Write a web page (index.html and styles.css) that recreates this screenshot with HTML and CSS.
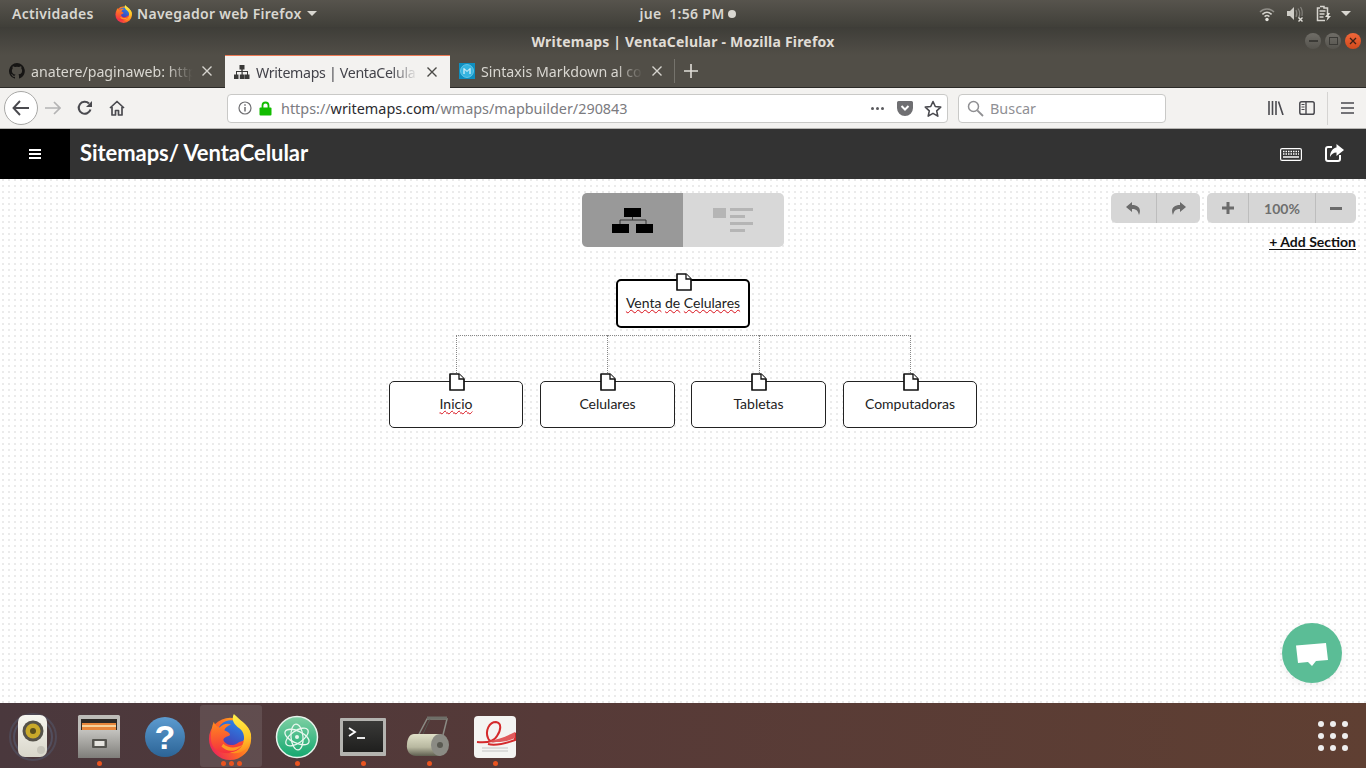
FILE: index.html
```html
<!DOCTYPE html>
<html lang="es">
<head>
<meta charset="utf-8">
<title>Writemaps | VentaCelular - Mozilla Firefox</title>
<link rel="stylesheet" href="styles.css">
</head>
<body>
<svg class="defs" width="0" height="0" aria-hidden="true">
  <defs>
    <linearGradient id="ffbase" x1="0.9" y1="0.3" x2="0.1" y2="0.8"><stop offset="0" stop-color="#ffb01f"/><stop offset="0.5" stop-color="#ff6a24"/><stop offset="1" stop-color="#ee2a55"/></linearGradient>
    <linearGradient id="ffflame" x1="0.4" y1="0" x2="0.5" y2="1"><stop offset="0" stop-color="#fff04a"/><stop offset="0.6" stop-color="#ffc928"/><stop offset="1" stop-color="#ff8a1f"/></linearGradient>
    <linearGradient id="ffblue" x1="0.7" y1="0" x2="0.2" y2="1"><stop offset="0" stop-color="#2a86e8"/><stop offset="0.6" stop-color="#3a55c4"/><stop offset="1" stop-color="#6a2aa0"/></linearGradient>
    <linearGradient id="fffox" x1="0.2" y1="0" x2="0.3" y2="1"><stop offset="0" stop-color="#ff8a1f"/><stop offset="1" stop-color="#f5303e"/></linearGradient>
    <linearGradient id="helpb" x1="0" y1="0" x2="0" y2="1"><stop offset="0" stop-color="#5c9bd0"/><stop offset="1" stop-color="#2c6496"/></linearGradient>
    <linearGradient id="atomg" x1="0" y1="0" x2="0" y2="1"><stop offset="0" stop-color="#7fd0a4"/><stop offset="1" stop-color="#14a86f"/></linearGradient>
    <linearGradient id="cabg" x1="0" y1="0" x2="0" y2="1"><stop offset="0" stop-color="#c4c3bf"/><stop offset="1" stop-color="#7f7e7a"/></linearGradient>
    <linearGradient id="rollg" x1="0" y1="0" x2="0" y2="1"><stop offset="0" stop-color="#e0e0c8"/><stop offset="0.6" stop-color="#b8b8a0"/><stop offset="1" stop-color="#5f5f50"/></linearGradient>
    <linearGradient id="spkg" x1="0" y1="0" x2="0" y2="1"><stop offset="0" stop-color="#f7f6f0"/><stop offset="1" stop-color="#d8d6ca"/></linearGradient>
    <linearGradient id="termg" x1="0" y1="0" x2="0" y2="1"><stop offset="0" stop-color="#3a3a38"/><stop offset="1" stop-color="#1f1f1e"/></linearGradient>
    <symbol id="ff" viewBox="0 0 48 48">
      <circle cx="23" cy="26" r="22" fill="url(#ffbase)"/>
      <circle cx="24" cy="21" r="14.500" fill="url(#ffblue)"/>
      <path d="M6 8c1 3 3 5 6 6 3-3 8-5 12-3-3 1-6 3-7 6 3 1 6 3 6 5-3 2-6 2-7 5 2 5 9 7 14 4 3-2 6-3 8-3-1 7-8 13-17 13C9 41 3 34 3 25c0-6 1-12 3-17z" fill="url(#fffox)"/>
      <path d="M16 31c5 5 13 5 20 1-5 7-15 9-22 2z" fill="#ff9a24"/>
      <path d="M27 0c-3 6 0 11 6 15 5 4 6 11 3 17-3 6-9 8-14 8 11 4 22-4 23-15C46 14 36 9 27 0z" fill="url(#ffflame)"/>
    </symbol>
    <symbol id="doc" viewBox="0 0 16 18">
      <path d="M1 1h9l5 5v11H1z" fill="#fff" stroke="#111" stroke-width="1.700" stroke-linejoin="round"/>
      <path d="M10 1v5h5" fill="#fff" stroke="#111" stroke-width="1.300"/>
    </symbol>
  </defs>
</svg>

<div class="screen">
  <header class="topbar">
    <div class="tb-left">
      <span class="tb-activities">Actividades</span>
      <span class="tb-app">
        <svg class="tb-ff"><use href="#ff"/></svg>
        <span>Navegador web Firefox</span>
        <i class="caret"></i>
      </span>
    </div>
    <div class="tb-clock"><span>jue&nbsp;&nbsp;1:56 PM</span><i class="clock-dot"></i></div>
    <div class="tb-right">
      <svg class="tray" width="16" height="16" viewBox="0 0 16 16"><path d="M1 6c4-4 10-4 14 0" fill="none" stroke="#8f8d87" stroke-width="1.500"/><path d="M3.400 8.400c2.800-2.600 6.400-2.600 9.200 0" fill="none" stroke="#d6d4ce" stroke-width="1.500"/><path d="M5.600 10.600c1.400-1.200 3.400-1.200 4.800 0" fill="none" stroke="#d6d4ce" stroke-width="1.500"/><circle cx="8" cy="13.500" r="1.700" fill="#e6e4de"/></svg>
      <svg class="tray" width="18" height="16" viewBox="0 0 18 16"><path d="M1 5h3l4-4v13l-4-4H1z" fill="#cfcdc7"/><path d="M10 4c1 2 1 5 0 7M12 2.500c2 3 2 7 .5 9.500M14.500 1c2 3 2 6 1.500 9" fill="none" stroke="#85837d" stroke-width="1.200"/><path d="M12.500 11.500l4 4M16.500 11.500l-4 4" stroke="#e0ded8" stroke-width="1.400"/></svg>
      <svg class="tray tray-batt" width="16" height="17" viewBox="0 0 16 17"><path d="M4 1.500h4v1.500h3.500v6M9 15.500H1.500V3H4" fill="none" stroke="#d6d4ce" stroke-width="1.500"/><path d="M3.500 6h6M3.500 9h5M3.500 12h4" stroke="#d6d4ce" stroke-width="1.300"/><path d="M12 8l-3 4h2.500L10.500 16l4.500-5h-2.500l1.500-3z" fill="#e0ded8"/></svg>
      <i class="caret caret-tray"></i>
    </div>
  </header>

  <div class="titlebar">
    <span class="title-text">Writemaps | VentaCelular - Mozilla Firefox</span>
    <div class="winbtns">
      <span class="winbtn"><i class="win-min"></i></span>
      <span class="winbtn"><i class="win-max"></i></span>
      <span class="winbtn winbtn-close">
        <svg width="8" height="8" viewBox="0 0 8 8"><path d="M1 1l6 6M7 1l-6 6" stroke="#3c2016" stroke-width="1.300"/></svg>
      </span>
    </div>
  </div>

  <nav class="tabbar">
    <div class="tab">
      <svg class="favicon" viewBox="0 0 16 16"><path fill="#161514" d="M8 0a8 8 0 0 0-2.500 15.600c.4.100.5-.2.500-.4v-1.400c-2.200.5-2.700-1-2.700-1-.4-.9-.9-1.200-.9-1.200-.7-.5.100-.5.100-.5.800.1 1.200.8 1.200.8.700 1.200 1.900.9 2.300.7.100-.5.300-.9.500-1.100-1.800-.2-3.600-.9-3.600-4 0-.9.300-1.600.8-2.100-.1-.2-.4-1 .1-2.100 0 0 .7-.2 2.200.8a7.600 7.600 0 0 1 4 0c1.500-1 2.200-.8 2.200-.8.400 1.100.2 1.900.1 2.100.5.600.8 1.300.8 2.100 0 3.100-1.900 3.700-3.700 3.900.3.300.6.800.6 1.500v2.200c0 .2.100.5.600.4A8 8 0 0 0 8 0z"/></svg>
      <span class="tab-title">anatere/paginaweb: http</span>
      <svg class="tab-x" viewBox="0 0 10 10"><path d="M.5.500l9 9M9.500.500l-9 9" stroke="#d6d4ce" stroke-width="1.400"/></svg>
    </div>
    <div class="tab tab-active">
      <svg class="favicon" viewBox="0 0 16 16"><path fill="#3a3a38" d="M5.500 1h5v4.500H8.700V7H14v3.500h1.500V15h-5v-4.500H13V8H8.700v2.500h1.500V15H5.800v-4.500h1.700V8H3v2.500h1.500V15H-.500v-4.500H2V7h5.300V5.500H5.500z"/></svg>
      <span class="tab-title">Writemaps | VentaCelula</span>
      <svg class="tab-x" viewBox="0 0 10 10"><path d="M.5.500l9 9M9.500.500l-9 9" stroke="#4a4946" stroke-width="1.400"/></svg>
    </div>
    <div class="tab">
      <svg class="favicon" viewBox="0 0 16 16"><rect width="16" height="16" fill="#0f8fc0"/><circle cx="8" cy="8" r="6.500" fill="#35b4e0" stroke="#8fdcf5" stroke-width=".6"/><path d="M5 11V5.500l3 3 3-3V11" fill="none" stroke="#fff" stroke-width="1"/></svg>
      <span class="tab-title">Sintaxis Markdown al cor</span>
      <svg class="tab-x" viewBox="0 0 10 10"><path d="M.5.500l9 9M9.500.500l-9 9" stroke="#d6d4ce" stroke-width="1.400"/></svg>
    </div>
    <i class="tab-sep"></i>
    <svg class="tab-plus" viewBox="0 0 14 14"><path d="M7 0v14M0 7h14" stroke="#e0ded8" stroke-width="1.600"/></svg>
  </nav>

  <div class="navbar">
    <span class="nav-back">
      <svg width="18" height="16" viewBox="0 0 18 16"><path d="M8 1L1.500 8 8 15M1.500 8H17" fill="none" stroke="#4a4a4f" stroke-width="1.900"/></svg>
    </span>
    <svg class="nav-ico nav-fwd" width="16" height="14" viewBox="0 0 16 14"><path d="M9 1l6 6-6 6M15 7H0" fill="none" stroke="#b4b4b4" stroke-width="1.700"/></svg>
    <svg class="nav-ico nav-reload" width="16" height="16" viewBox="0 0 16 16"><path d="M13.500 9.500A6 6 0 1 1 12 3.500" fill="none" stroke="#4a4a4f" stroke-width="2.100"/><path d="M15 1v6H9z" fill="#4a4a4f"/></svg>
    <svg class="nav-ico nav-home" width="16" height="16" viewBox="0 0 16 16"><path d="M1 8l7-6.500L15 8M3 7v8h3.500v-4.500h3V15H13V7" fill="none" stroke="#4a4a4f" stroke-width="1.700" stroke-linejoin="round"/></svg>

    <div class="urlbar">
      <svg class="url-info" width="16" height="16" viewBox="0 0 16 16"><circle cx="8" cy="8" r="6" fill="none" stroke="#6f6f72" stroke-width="1.200"/><path d="M8 7v4.500M8 4.300v1.400" stroke="#6f6f72" stroke-width="1.500"/></svg>
      <svg class="url-lock" width="13" height="15" viewBox="0 0 13 15"><path d="M3.500 7V4.500a3 3 0 0 1 6 0V7" fill="none" stroke="#12bc00" stroke-width="1.800"/><rect x=".5" y="6.500" width="12" height="8" rx="1" fill="#12bc00"/></svg>
      <span class="url-text">https://<b>writemaps.com</b>/wmaps/mapbuilder/290843</span>
      <span class="url-dots"><i></i><i></i><i></i></span>
      <svg class="url-pocket" width="16" height="15" viewBox="0 0 16 15"><path d="M1.500 0h13A1.500 1.500 0 0 1 16 1.500V7A8 8 0 0 1 0 7V1.500A1.500 1.500 0 0 1 1.500 0z" fill="#6f6f72"/><path d="M4.500 5L8 8.500 11.500 5" fill="none" stroke="#fff" stroke-width="2"/></svg>
      <svg class="url-star" width="18" height="17" viewBox="0 0 18 17"><path d="M9 1.500l2.300 5 5.400.6-4 3.700 1.100 5.300L9 13.400l-4.800 2.700 1.100-5.300-4-3.700 5.400-.6z" fill="none" stroke="#4a4a4f" stroke-width="1.600" stroke-linejoin="round"/></svg>
    </div>

    <div class="searchbar">
      <svg width="17" height="17" viewBox="0 0 17 17"><circle cx="6.500" cy="6.500" r="5" fill="none" stroke="#8f8f92" stroke-width="1.500"/><path d="M10.300 10.300l5.700 5.700" stroke="#8f8f92" stroke-width="1.800"/></svg>
      <span>Buscar</span>
    </div>

    <svg class="nav-ico nav-lib" width="16" height="14" viewBox="0 0 16 14"><path d="M1 0v14M4.500 0v14M8 0v14M10.500.5L15 14" fill="none" stroke="#4a4a4f" stroke-width="1.600"/></svg>
    <svg class="nav-ico nav-side" width="16" height="14" viewBox="0 0 16 14"><rect x=".8" y=".8" width="14.400" height="12.400" rx="1.800" fill="none" stroke="#4a4a4f" stroke-width="1.500"/><path d="M7 1v12" stroke="#4a4a4f" stroke-width="1.400"/><path d="M2.500 3.500h3M2.500 6h3M2.500 8.500h3" stroke="#4a4a4f"/></svg>
    <i class="nav-sep"></i>
    <svg class="nav-ico nav-menu" width="13" height="12" viewBox="0 0 13 12"><path d="M0 1h13M0 6h13M0 11h13" stroke="#4a4a4f" stroke-width="1.700"/></svg>
  </div>

  <div class="appbar">
    <div class="app-burger">
      <svg width="12" height="10" viewBox="0 0 12 10"><path d="M0 1h12M0 5h12M0 9h12" stroke="#fff" stroke-width="1.800"/></svg>
    </div>
    <h1 class="app-title">Sitemaps/ VentaCelular</h1>
    <svg class="app-kb" width="22" height="13" viewBox="0 0 22 13"><rect x=".6" y=".6" width="20.800" height="11.800" rx="1.500" fill="none" stroke="#fff" stroke-width="1.200"/><path d="M3 3.500h16M3 6h16" stroke="#fff" stroke-width="1.500" stroke-dasharray="1.500 1"/><path d="M3 9h16" stroke="#fff" stroke-width="1.500"/></svg>
    <svg class="app-share" width="19" height="18" viewBox="0 0 19 18"><path d="M7 3H3A2 2 0 0 0 1 5v10a2 2 0 0 0 2 2h10a2 2 0 0 0 2-2v-4" fill="none" stroke="#fff" stroke-width="2"/><path d="M11.500 0L19 6l-7.500 6V8.500C8.500 8.500 6.500 10 5 13 5 7.500 8 4 11.500 3.500z" fill="#fff"/></svg>
  </div>

  <main class="canvas">
    <div class="viewtoggle">
      <span class="vt-btn vt-on">
        <svg width="42" height="25" viewBox="0 0 42 25"><rect x="12" y="0" width="17" height="9" fill="#000"/><path d="M20.500 9v3M8 17v-5h26v5" fill="none" stroke="#333" stroke-width="1"/><rect x="0" y="16" width="17" height="9" fill="#000"/><rect x="24" y="16" width="17" height="9" fill="#000"/></svg>
      </span>
      <span class="vt-btn vt-off">
        <svg class="vt-list" width="40" height="24" viewBox="0 0 40 24"><rect x="0" y="0" width="13" height="10" fill="#b5b5b5"/><path d="M17 1.500h23M17 8.500h15M17 15.500h23M17 22.500h15" stroke="#b5b5b5" stroke-width="3"/></svg>
      </span>
    </div>

    <div class="ctrls">
      <div class="ctrl-row">
        <div class="ctrl-group">
          <span class="ctrl ctrl-hist"><svg width="15" height="13" viewBox="0 0 15 13"><path d="M6 0L0 5l6 5V7c4 0 6 1.500 7 6 2.500-5.500 0-10-7-10z" fill="#6b6b6b"/></svg></span>
          <span class="ctrl ctrl-hist"><svg width="15" height="13" viewBox="0 0 15 13"><path d="M9 0l6 5-6 5V7c-4 0-6 1.500-7 6-2.500-5.500 0-10 7-10z" fill="#6b6b6b"/></svg></span>
        </div>
        <div class="ctrl-group">
          <span class="ctrl ctrl-pm"><svg width="12" height="12" viewBox="0 0 12 12"><path d="M6 0v12M0 6h12" stroke="#6b6b6b" stroke-width="3"/></svg></span>
          <span class="ctrl ctrl-pct">100%</span>
          <span class="ctrl ctrl-pm"><svg width="12" height="3" viewBox="0 0 12 3"><path d="M0 1.500h12" stroke="#6b6b6b" stroke-width="3"/></svg></span>
        </div>
      </div>
      <a class="add-section">+ Add Section</a>
    </div>

    <div class="tree">
      <i class="ln ln-h"></i>
      <i class="ln ln-v v1"></i>
      <i class="ln ln-v v2"></i>
      <i class="ln ln-v v3"></i>
      <i class="ln ln-v v4"></i>

      <div class="node node-root"><svg class="doc"><use href="#doc"/></svg><span class="label"><u>Venta</u> <u>de</u> <u>Celulares</u></span></div>
      <div class="node n1"><svg class="doc"><use href="#doc"/></svg><span class="label"><u>Inicio</u></span></div>
      <div class="node n2"><svg class="doc"><use href="#doc"/></svg><span class="label">Celulares</span></div>
      <div class="node n3"><svg class="doc"><use href="#doc"/></svg><span class="label">Tabletas</span></div>
      <div class="node n4"><svg class="doc"><use href="#doc"/></svg><span class="label">Computadoras</span></div>
    </div>

    <div class="chat">
      <svg width="34" height="26" viewBox="0 0 34 26"><path d="M1 3.500L31 1l2 17-12 1-4 5-4-4-10 1z" fill="#fff"/></svg>
    </div>
  </main>

  <footer class="dock">
    <div class="dock-item">
      <svg width="50" height="48" viewBox="0 0 50 48"><circle cx="25" cy="24" r="23" fill="none" stroke="#5a6a88" stroke-width="2" opacity=".35"/><circle cx="25" cy="24" r="19" fill="none" stroke="#5a6a88" stroke-width="2" opacity=".45"/><rect x="10" y="2" width="29" height="42" rx="7" fill="url(#spkg)"/><circle cx="25" cy="18" r="10.500" fill="#55524a"/><circle cx="25" cy="18" r="7.500" fill="#c9a92a"/><circle cx="25" cy="18" r="3" fill="#5a4e1c"/><circle cx="33" cy="37" r="4" fill="#c8c6bc"/></svg>
    </div>
    <div class="dock-item dock-open">
      <svg width="44" height="44" viewBox="0 0 44 44"><rect x="1" y="0" width="42" height="43" rx="1.500" fill="#bdbcb8"/><rect x="4" y="4" width="36" height="12" fill="#2d2a26"/><rect x="5" y="8" width="34" height="9" fill="#e8873a"/><rect x="5" y="10" width="34" height="2" fill="#f7d29a"/><rect x="1" y="15" width="42" height="28" fill="url(#cabg)"/><rect x="15" y="24" width="15" height="9" rx="1" fill="#55544f"/><rect x="17.500" y="26" width="10" height="5" fill="#e6e5e0"/></svg>
      <span class="dots"><i></i></span>
    </div>
    <div class="dock-item">
      <svg width="42" height="42" viewBox="0 0 42 42"><circle cx="21" cy="21" r="20" fill="url(#helpb)"/><text class="help-q" x="21" y="33" text-anchor="middle">?</text></svg>
    </div>
    <div class="dock-item dock-active">
      <svg class="dock-ff"><use href="#ff"/></svg>
      <span class="dots"><i></i><i></i><i></i></span>
    </div>
    <div class="dock-item dock-open">
      <svg width="44" height="44" viewBox="0 0 44 44"><circle cx="22" cy="22" r="20.500" fill="url(#atomg)" stroke="#e8f3ec" stroke-width="1.500"/><g fill="none" stroke="#e8f7ee" stroke-width="1.300"><ellipse cx="22" cy="22" rx="13" ry="6" transform="rotate(25 22 22)"/><ellipse cx="22" cy="22" rx="13" ry="6" transform="rotate(85 22 22)"/><ellipse cx="22" cy="22" rx="13" ry="6" transform="rotate(145 22 22)"/></g><circle cx="22" cy="22" r="2" fill="#e8f7ee"/></svg>
      <span class="dots"><i></i></span>
    </div>
    <div class="dock-item dock-open">
      <svg width="46" height="38" viewBox="0 0 46 38"><rect width="46" height="38" rx="1" fill="#b4b4b0"/><rect x="3" y="3" width="40" height="31" fill="url(#termg)"/><path d="M9 10l6 4-6 4" fill="none" stroke="#fff" stroke-width="1.800"/><path d="M17 20h8" stroke="#fff" stroke-width="1.800"/></svg>
      <span class="dots"><i></i></span>
    </div>
    <div class="dock-item dock-open">
      <svg width="46" height="42" viewBox="0 0 46 42"><path d="M12 20L21 3h20l-4 16" fill="none" stroke="#8b8b84" stroke-width="1.500"/><path d="M16 20L24 3" fill="none" stroke="#55554f" stroke-width="1"/><path d="M21 2h20" stroke="#6e6e68" stroke-width="3"/><path d="M8 18h24a7 7 0 0 1 6 3v16a7 7 0 0 1-6 3H10C4 40 0 35 1 28c.5-6 3-10 7-10z" fill="url(#rollg)"/><ellipse cx="34" cy="29" rx="9" ry="11" fill="#8b8b84"/><circle cx="34" cy="29" r="3" fill="#5a5a52"/></svg>
      <span class="dots"><i></i></span>
    </div>
    <div class="dock-item dock-open">
      <svg width="42" height="42" viewBox="0 0 42 42"><rect width="42" height="42" rx="4" fill="#f4f4f2"/><path d="M3 26c10 1 17 0 20-6 4-6 5-13-1-14-7 0-11 9-8 16 1 3 4 4 8 3 7-1 13-4 19-7v6c-11 4-19 6-27 4" fill="none" stroke="#d42a2c" stroke-width="2"/><path d="M14 25c9-1 17-4 27-9v6c-9 4-18 5-27 3z" fill="#e05a5c"/><path d="M8 32h26M8 35h26" stroke="#c4c4c4"/></svg>
      <span class="dots"><i></i></span>
    </div>
    <div class="appgrid">
      <i></i><i></i><i></i><i></i><i></i><i></i><i></i><i></i><i></i>
    </div>
  </footer>
</div>
</body>
</html>
```
FILE: styles.css
```css
* { box-sizing: border-box; }
html, body { margin: 0; padding: 0; }
body { width: 1366px; height: 768px; overflow: hidden; font-family: "Noto Sans", "Open Sans", sans-serif; }
.defs { position: absolute; }
i { display: block; font-style: normal; }
svg { display: block; flex: none; }

.screen { width: 1366px; height: 768px; display: flex; flex-direction: column; }

/* GNOME top bar */
.topbar { height: 27px; flex: none; display: grid; grid-template-columns: 1fr auto 1fr; align-items: center; padding-left: 12px; padding-right: 15px; background: linear-gradient(#57544d, #403f39); color: #d9d7d1; font-size: 14px; font-weight: 600; letter-spacing: .3px; }
.tb-left { display: flex; align-items: center; }
.tb-activities { width: 103px; flex: none; }
.tb-app { display: flex; align-items: center; gap: 4px; }
.tb-ff { width: 18px; height: 18px; }
.caret { width: 0; height: 0; border-left: 5px solid transparent; border-right: 5px solid transparent; border-top: 5px solid #d9d7d1; margin-left: 1px; }
.tb-clock { display: flex; align-items: center; gap: 3px; margin-left: 12px; }
.clock-dot { width: 8px; height: 8px; border-radius: 50%; background: #d9d7d1; }
.tb-right { display: flex; align-items: center; justify-content: flex-end; gap: 11px; }
.tray-batt { margin-left: 1px; }
.caret-tray { margin-left: -2px; }

/* Window title */
.titlebar { height: 28px; flex: none; position: relative; display: flex; align-items: center; justify-content: center; background: linear-gradient(#3e3d38, #514e47); color: #e0ddd6; font-size: 14px; font-weight: 700; letter-spacing: .2px; }
.winbtns { position: absolute; right: 5px; top: 6px; display: flex; gap: 4px; }
.winbtn { width: 16px; height: 16px; border-radius: 50%; background: linear-gradient(#6f6d67, #55534d); display: flex; align-items: center; justify-content: center; }
.winbtn-close { background: linear-gradient(#f0673a, #d24a1c); }
.win-min { width: 9px; height: 2px; background: #3b3a36; }
.win-max { width: 9px; height: 8px; border: 1px solid #3b3a36; }

/* Tabs */
.tabbar { height: 33px; flex: none; display: flex; align-items: stretch; background: #514e47; border-bottom: 1px solid #2b2a27; color: #d9d7d1; font-size: 14.200px; }
.tab { width: 225px; display: flex; align-items: center; padding-left: 9px; padding-right: 13px; gap: 6px; }
.tab-active { background: #f3f2f0; color: #43434a; border-top: 2px solid #ed7a55; margin-top: -1px; height: 34px; letter-spacing: -.32px; }
.favicon { width: 16px; height: 16px; }
.tab-title { flex: 1; min-width: 0; white-space: nowrap; overflow: hidden; -webkit-mask-image: linear-gradient(90deg, #000 82%, transparent 98%); mask-image: linear-gradient(90deg, #000 82%, transparent 98%); }
.tab-x { width: 10px; height: 10px; }
.tab-sep { width: 1px; height: 24px; background: #75736c; align-self: center; margin-left: -1px; }
.tab-plus { width: 14px; height: 14px; align-self: center; margin-left: 9px; }

/* Navigation bar */
.navbar { height: 41px; flex: none; display: flex; align-items: center; background: #f3f2f0; border-bottom: 1px solid #b6b5b2; padding-left: 4px; }
.nav-back { width: 34px; height: 34px; border: 1px solid #a8a8a6; border-radius: 50%; background: #fff; display: flex; align-items: center; justify-content: center; }
.nav-fwd { margin-left: 7px; }
.nav-reload { margin-left: 16px; }
.nav-home { margin-left: 16px; }
.urlbar { margin-left: 102px; width: 721px; height: 29px; border: 1px solid #c9c9c7; border-radius: 4px; background: #fff; display: flex; align-items: center; padding-left: 9px; }
.url-lock { margin-left: 6px; }
.url-text { margin-left: 9px; font-size: 14.400px; color: #7b7b80; white-space: nowrap; }
.url-text b { font-weight: 400; color: #2b2b30; }
.url-dots { margin-left: auto; display: flex; gap: 2px; }
.url-dots i { width: 3px; height: 3px; border-radius: 50%; background: #5a5a5e; }
.url-pocket { margin-left: 13px; }
.url-star { margin-left: 11px; margin-right: 5px; }
.searchbar { margin-left: 10px; width: 208px; height: 29px; border: 1px solid #c9c9c7; border-radius: 4px; background: #fff; display: flex; align-items: center; padding-left: 8px; gap: 6px; font-size: 14.400px; color: #8f8f94; }
.nav-lib { margin-left: 102px; }
.nav-side { margin-left: 15px; }
.nav-sep { width: 1px; height: 33px; background: #d5d4d2; margin-left: 12px; }
.nav-menu { margin-left: 13px; }

/* App header */
.appbar { height: 50px; flex: none; display: flex; align-items: center; background: #333; padding-right: 22px; }
.app-burger { width: 70px; height: 50px; background: #000; display: flex; align-items: center; justify-content: center; }
.app-title { margin: 0 0 4px 10px; flex: 1; font-family: Lato, sans-serif; font-size: 22px; font-weight: 700; color: #fff; letter-spacing: -.06px; }
.app-kb { margin-right: 23px; }
.app-share { margin-bottom: 3px; }

/* Canvas */
.canvas { flex: 1; position: relative; background-color: #ebebeb; background-image: linear-gradient(90deg, transparent 2px, #fff 2px), linear-gradient(transparent 2px, #fff 2px); background-size: 6px 6px; background-position: 2px 0; font-family: Lato, sans-serif; }

.viewtoggle { position: absolute; left: 582px; top: 14px; width: 202px; height: 54px; display: flex; border-radius: 5px; overflow: hidden; }
.vt-btn { flex: 1; display: flex; align-items: center; justify-content: center; }
.vt-on { background: #999; }
.vt-off { background: #d8d8d8; }
.vt-list { margin-right: 2px; }

.ctrls { position: absolute; right: 10px; top: 14px; display: flex; flex-direction: column; align-items: flex-end; gap: 11px; }
.ctrl-row { display: flex; gap: 7px; }
.ctrl-group { height: 30px; display: flex; background: #d6d6d6; border-radius: 5px; overflow: hidden; }
.ctrl { height: 30px; display: flex; align-items: center; justify-content: center; color: #6f6f6f; font-size: 14px; font-weight: 700; }
.ctrl + .ctrl { border-left: 1px solid #bdbdbd; }
.ctrl-hist { width: 44.500px; }
.ctrl-pm { width: 41px; }
.ctrl-pct { width: 67px; }
.add-section { font-size: 14px; font-weight: 700; color: #111; border-bottom: 1.500px solid #111; line-height: 15px; }

.tree { position: absolute; inset: 0; }
.ln { position: absolute; }
.ln-h { left: 456px; top: 156px; width: 455px; border-top: 1px dotted #888; }
.ln-v { top: 156px; height: 42px; border-left: 1px dotted #888; }
.v1 { left: 456px; }
.v2 { left: 607px; }
.v3 { left: 759px; }
.v4 { left: 910px; }

.node { position: absolute; top: 202px; height: 47px; padding-bottom: 2px; background: #fff; border: 1px solid #222; border-radius: 5px; display: flex; align-items: center; justify-content: center; font-size: 14px; color: #222; }
.node-root { left: 616px; top: 100px; width: 134px; height: 49px; border: 2.500px solid #000; padding-bottom: 2px; }
.n1 { left: 389px; width: 134px; }
.n2 { left: 540px; width: 135px; }
.n3 { left: 691px; width: 135px; }
.n4 { left: 843px; width: 134px; }
.doc { position: absolute; left: 50%; top: -9px; width: 16px; height: 18px; margin-left: -7.500px; }
.node-root .doc { top: -8px; }
.label { white-space: nowrap; }
.label u { text-decoration: underline wavy #d8101a 1.200px; text-underline-offset: 1px; }

.chat { position: absolute; left: 1282px; top: 444px; width: 60px; height: 60px; border-radius: 50%; background: #5bbd96; box-shadow: 0 3px 8px rgba(0,0,0,.06); display: flex; align-items: center; justify-content: center; padding-top: 3px; }

/* Dock */
.dock { height: 65px; flex: none; display: flex; align-items: stretch; background: linear-gradient(90deg, #4a383d, #563a38 40%, #5f3f32); }
.dock-item { width: 66px; position: relative; display: flex; align-items: center; justify-content: center; padding-top: 2px; }
.dots { position: absolute; bottom: 2px; left: 0; right: 0; display: flex; justify-content: center; gap: 3px; }
.dots i { width: 5px; height: 5px; border-radius: 50%; background: #e95420; }
.dock-active::before { content: ""; position: absolute; left: 2px; right: 2px; top: 2px; bottom: 1px; background: rgba(255,255,255,.1); border-radius: 3px; }
.dock-ff { width: 46px; height: 46px; position: relative; }
.help-q { font-family: "Liberation Sans", sans-serif; font-size: 34px; font-weight: 700; fill: #fff; }
.appgrid { margin-left: auto; margin-right: 18px; align-self: center; display: grid; grid-template-columns: repeat(3, 6px); gap: 6px; }
.appgrid i { width: 6px; height: 6px; border-radius: 50%; background: #eee; }
```
